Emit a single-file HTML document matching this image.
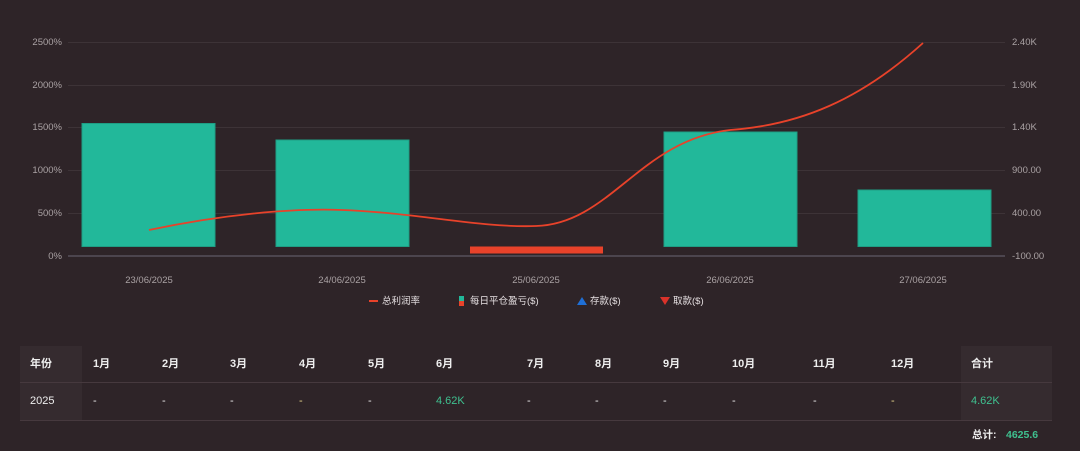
<!DOCTYPE html>
<html><head><meta charset="utf-8"><style>
body{margin:0;width:1080px;height:451px;background:#2e2428;overflow:hidden;font-family:"Liberation Sans","Noto Sans CJK SC",sans-serif;position:relative}
.t{position:absolute;font-size:11px;line-height:13px;color:#eee;white-space:nowrap}
.b{font-weight:bold}
</style></head><body>
<svg width="1080" height="451" style="position:absolute;left:0;top:0" font-family="Liberation Sans, Noto Sans CJK SC, sans-serif">
<g stroke="#3d3337" stroke-width="1">
<line x1="68" y1="42.5" x2="1005" y2="42.5"/><line x1="68" y1="85.5" x2="1005" y2="85.5"/>
<line x1="68" y1="127.5" x2="1005" y2="127.5"/><line x1="68" y1="170.5" x2="1005" y2="170.5"/>
<line x1="68" y1="213.5" x2="1005" y2="213.5"/></g>
<line x1="68" y1="256" x2="1005" y2="256" stroke="#57505a" stroke-width="1.5"/>
<g fill="#aaa2a4" font-size="9.5" text-anchor="end">
<text x="62" y="45">2500%</text><text x="62" y="88">2000%</text><text x="62" y="130">1500%</text>
<text x="62" y="173">1000%</text><text x="62" y="216">500%</text><text x="62" y="259">0%</text></g>
<g fill="#aaa2a4" font-size="9.5">
<text x="1012" y="45">2.40K</text><text x="1012" y="88">1.90K</text><text x="1012" y="130">1.40K</text>
<text x="1012" y="173">900.00</text><text x="1012" y="216">400.00</text><text x="1012" y="259">-100.00</text></g>
<g fill="#aaa2a4" font-size="9.5" text-anchor="middle">
<text x="149" y="283">23/06/2025</text><text x="342" y="283">24/06/2025</text><text x="536" y="283">25/06/2025</text>
<text x="730" y="283">26/06/2025</text><text x="923" y="283">27/06/2025</text></g>
<g fill="#22b89a" stroke="#1e9e84" stroke-width="1">
<rect x="82" y="123.5" width="133" height="123"/><rect x="276" y="140" width="133" height="106.5"/>
<rect x="664" y="132" width="133" height="114.5"/><rect x="858" y="190" width="133" height="56.5"/></g>
<rect x="470" y="246.5" width="133" height="7" fill="#e8422a"/>
<path d="M149,230 C220,215 290,208 342,210 C420,213 480,228 536,226 C610,224 640,140 730,130 C800,125 860,100 923,43" fill="none" stroke="#e8422a" stroke-width="1.8"/>
<line x1="369" y1="301" x2="378" y2="301" stroke="#e8422a" stroke-width="2"/>
<rect x="459" y="296" width="5" height="5" fill="#22b89a"/><rect x="459" y="301" width="5" height="5" fill="#e8422a"/>
<polygon points="577,305 582,297 587,305" fill="#1f6fd6"/>
<polygon points="660,297 670,297 665,305" fill="#d9322a"/>
<g fill="#e6e0e2" font-size="9.5"><text x="382" y="304">总利润率</text><text x="470" y="304">每日平仓盈亏($)</text>
<text x="590" y="304">存款($)</text><text x="673" y="304">取款($)</text></g>
<rect x="20" y="346" width="62" height="75" fill="#352b2f"/>
<rect x="961" y="346" width="91" height="75" fill="#352b2f"/>
<line x1="20" y1="382.5" x2="1052" y2="382.5" stroke="#46393e"/>
<line x1="20" y1="420.5" x2="1052" y2="420.5" stroke="#46393e"/>
</svg>
<div class="t b" style="left:30px;top:358px">年份</div>
<div class="t b" style="left:93px;top:358px">1月</div><div class="t b" style="left:162px;top:358px">2月</div>
<div class="t b" style="left:230px;top:358px">3月</div><div class="t b" style="left:299px;top:358px">4月</div>
<div class="t b" style="left:368px;top:358px">5月</div><div class="t b" style="left:436px;top:358px">6月</div>
<div class="t b" style="left:527px;top:358px">7月</div><div class="t b" style="left:595px;top:358px">8月</div>
<div class="t b" style="left:663px;top:358px">9月</div><div class="t b" style="left:732px;top:358px">10月</div>
<div class="t b" style="left:813px;top:358px">11月</div><div class="t b" style="left:891px;top:358px">12月</div>
<div class="t b" style="left:971px;top:358px">合计</div>
<div class="t" style="left:30px;top:395px">2025</div>
<div class="t" style="left:93px;top:395px">-</div><div class="t" style="left:162px;top:395px">-</div>
<div class="t" style="left:230px;top:395px">-</div><div class="t" style="left:299px;top:395px;color:#e6d38a">-</div>
<div class="t" style="left:368px;top:395px">-</div><div class="t" style="left:436px;top:395px;color:#3fc08f">4.62K</div>
<div class="t" style="left:527px;top:395px">-</div><div class="t" style="left:595px;top:395px">-</div>
<div class="t" style="left:663px;top:395px">-</div><div class="t" style="left:732px;top:395px">-</div>
<div class="t" style="left:813px;top:395px">-</div><div class="t" style="left:891px;top:395px;color:#e6d38a">-</div>
<div class="t" style="left:971px;top:395px;color:#3fc08f">4.62K</div>
<div class="t b" style="left:972px;top:429px;font-size:10.5px">总计:</div>
<div class="t b" style="left:1006px;top:429px;font-size:10.5px;color:#3fc08f">4625.6</div>
</body></html>
